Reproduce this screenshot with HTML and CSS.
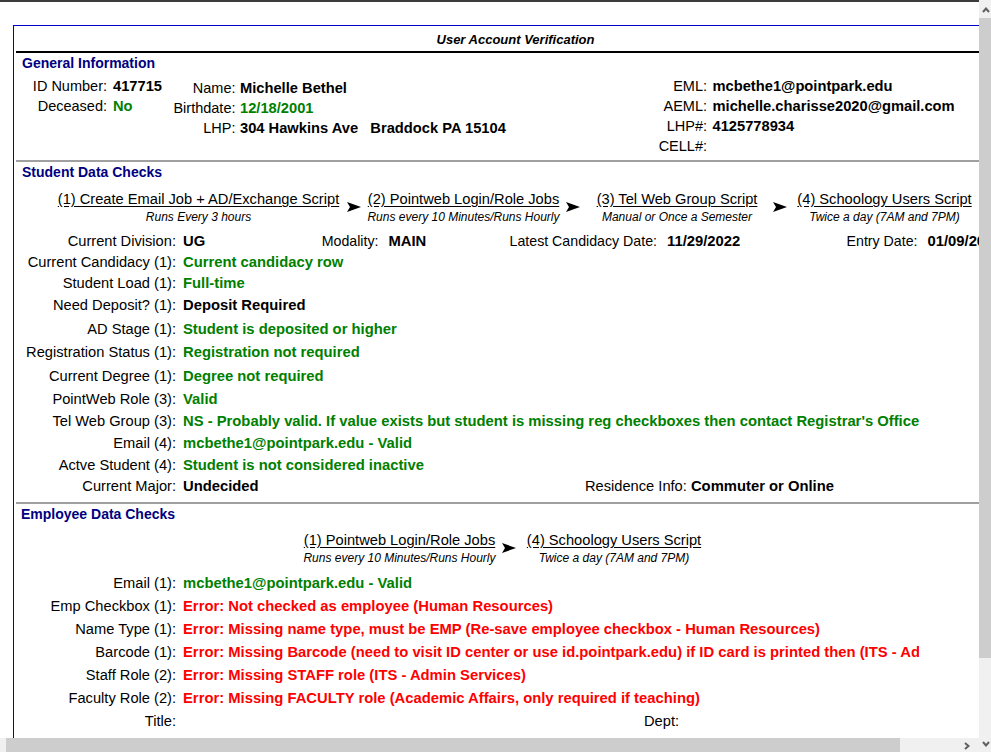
FILE: index.html
```html
<!DOCTYPE html>
<html>
<head>
<meta charset="utf-8">
<title>User Account Verification</title>
<link rel="stylesheet" href="styles.css">
</head>
<body>
<div class="frame">
  <div class="pane">
    <div class="viewport">
      <div class="box">
        <div class="title">User Account Verification</div>
        <div class="rule-black"></div>

        <div class="sec-head">General Information</div>
        <div class="gen">
          <div class="gcol g1">
            <span class="glbl">ID Number:</span><span class="gval">417715</span>
            <span class="glbl">Deceased:</span><span class="gval ok">No</span>
          </div>
          <div class="gcol g2">
            <span class="glbl">Name:</span><span class="gval">Michelle Bethel</span>
            <span class="glbl">Birthdate:</span><span class="gval ok">12/18/2001</span>
            <span class="glbl">LHP:</span><span class="gval">304 Hawkins Ave&nbsp;&nbsp;&nbsp;Braddock PA 15104</span>
          </div>
          <div class="gcol g3">
            <span class="glbl">EML:</span><span class="gval">mcbethe1@pointpark.edu</span>
            <span class="glbl">AEML:</span><span class="gval">michelle.charisse2020@gmail.com</span>
            <span class="glbl">LHP#:</span><span class="gval">4125778934</span>
            <span class="glbl">CELL#:</span><span class="gval"></span>
          </div>
        </div>
        <div class="rule-gray"></div>

        <div class="sec-head">Student Data Checks</div>
        <div class="flow flow-student">
          <div class="step st-1">
            <div class="step-name">(1) Create Email Job + AD/Exchange Script</div>
            <div class="step-note">Runs Every 3 hours</div>
          </div>
          <div class="arrow"><svg width="14" height="10" viewBox="0 0 14 10"><path d="M0 0 L14 5 L0 10 L3 5 Z" fill="#000"/></svg></div>
          <div class="step st-2">
            <div class="step-name">(2) Pointweb Login/Role Jobs</div>
            <div class="step-note">Runs every 10 Minutes/Runs Hourly</div>
          </div>
          <div class="arrow"><svg width="14" height="10" viewBox="0 0 14 10"><path d="M0 0 L14 5 L0 10 L3 5 Z" fill="#000"/></svg></div>
          <div class="step st-3">
            <div class="step-name">(3) Tel Web Group Script</div>
            <div class="step-note">Manual or Once a Semester</div>
          </div>
          <div class="arrow arrow-narrow"><svg width="14" height="10" viewBox="0 0 14 10"><path d="M0 0 L14 5 L0 10 L3 5 Z" fill="#000"/></svg></div>
          <div class="step st-4">
            <div class="step-name">(4) Schoology Users Script</div>
            <div class="step-note">Twice a day (7AM and 7PM)</div>
          </div>
        </div>

        <div class="rows student">
          <div class="row first">
            <span class="lbl">Current Division:</span>
            <span class="val c-ug">UG</span>
            <span class="lbl lbl-sm l-mod">Modality:</span>
            <span class="val wide-gap c-main">MAIN</span>
            <span class="lbl lbl-sm l-cand">Latest Candidacy Date:</span>
            <span class="val wide-gap c-date">11/29/2022</span>
            <span class="lbl lbl-sm l-entry">Entry Date:</span>
            <span class="val wide-gap">01/09/2023</span>
          </div>
          <div class="row up1"><span class="lbl">Current Candidacy (1):</span><span class="val ok">Current candidacy row</span></div>
          <div class="row up1"><span class="lbl">Student Load (1):</span><span class="val ok">Full-time</span></div>
          <div class="row"><span class="lbl">Need Deposit? (1):</span><span class="val">Deposit Required</span></div>
          <div class="row dn2"><span class="lbl">AD Stage (1):</span><span class="val ok">Student is deposited or higher</span></div>
          <div class="row dn1"><span class="lbl">Registration Status (1):</span><span class="val ok">Registration not required</span></div>
          <div class="row dn2"><span class="lbl">Current Degree (1):</span><span class="val ok">Degree not required</span></div>
          <div class="row dn1"><span class="lbl">PointWeb Role (3):</span><span class="val ok">Valid</span></div>
          <div class="row"><span class="lbl">Tel Web Group (3):</span><span class="val ok">NS - Probably valid. If value exists but student is missing reg checkboxes then contact Registrar's Office</span></div>
          <div class="row"><span class="lbl">Email (4):</span><span class="val ok">mcbethe1@pointpark.edu - Valid</span></div>
          <div class="row"><span class="lbl">Actve Student (4):</span><span class="val ok">Student is not considered inactive</span></div>
          <div class="row up1">
            <span class="lbl">Current Major:</span>
            <span class="val c-major">Undecided</span>
            <span class="plain">Residence Info: <b class="val-inline">Commuter or Online</b></span>
          </div>
        </div>
        <div class="rule-gray rule-emp"></div>

        <div class="sec-head emp-head">Employee Data Checks</div>
        <div class="flow flow-emp">
          <div class="step se-1">
            <div class="step-name">(1) Pointweb Login/Role Jobs</div>
            <div class="step-note">Runs every 10 Minutes/Runs Hourly</div>
          </div>
          <div class="arrow"><svg width="14" height="10" viewBox="0 0 14 10"><path d="M0 0 L14 5 L0 10 L3 5 Z" fill="#000"/></svg></div>
          <div class="step se-2">
            <div class="step-name">(4) Schoology Users Script</div>
            <div class="step-note">Twice a day (7AM and 7PM)</div>
          </div>
        </div>

        <div class="rows emp">
          <div class="row"><span class="lbl">Email (1):</span><span class="val ok">mcbethe1@pointpark.edu - Valid</span></div>
          <div class="row"><span class="lbl">Emp Checkbox (1):</span><span class="val err">Error: Not checked as employee (Human Resources)</span></div>
          <div class="row"><span class="lbl">Name Type (1):</span><span class="val err">Error: Missing name type, must be EMP (Re-save employee checkbox - Human Resources)</span></div>
          <div class="row"><span class="lbl">Barcode (1):</span><span class="val err">Error: Missing Barcode (need to visit ID center or use id.pointpark.edu) if ID card is printed then (ITS - Admin Services)</span></div>
          <div class="row"><span class="lbl">Staff Role (2):</span><span class="val err">Error: Missing STAFF role (ITS - Admin Services)</span></div>
          <div class="row"><span class="lbl">Faculty Role (2):</span><span class="val err">Error: Missing FACULTY role (Academic Affairs, only required if teaching)</span></div>
          <div class="row"><span class="lbl">Title:</span><span class="val c-title"></span><span class="plain">Dept:</span></div>
          <div class="row"><span class="lbl">Role:</span><span class="val"></span></div>
        </div>
      </div>
    </div>
    <div class="hscroll">
      <div class="hthumb"></div>
      <div class="hbtn">
        <svg width="6" height="8" viewBox="0 0 6 8"><polyline points="1,1 4.5,4 1,7" fill="none" stroke="#606060" stroke-width="2"/></svg>
      </div>
    </div>
  </div>
  <div class="vscroll">
    <div class="vbtn-up">
      <svg width="8" height="6" viewBox="0 0 8 6"><polyline points="1,5 4,1.5 7,5" fill="none" stroke="#606060" stroke-width="2"/></svg>
    </div>
    <div class="vthumb"></div>
    <div class="vbtn-down">
      <svg width="8" height="6" viewBox="0 0 8 6"><polyline points="1,1 4,4.5 7,1" fill="none" stroke="#606060" stroke-width="2"/></svg>
    </div>
  </div>
</div>
</body>
</html>
```

FILE: styles.css
```css
* { box-sizing: border-box; }

html, body {
  margin: 0;
  padding: 0;
  background: #fff;
}

body {
  font-family: "Liberation Sans", Arial, sans-serif;
  color: #000;
  font-size: 14px;
}

.frame {
  display: flex;
  width: 991px;
  height: 752px;
  overflow: hidden;
}

.pane {
  width: 979px;
  flex: none;
  display: flex;
  flex-direction: column;
  border-top: 2px solid #3c3c3c;
}

.viewport {
  flex: 1;
  overflow: hidden;
  padding: 23px 0 0 13px;
}

.box {
  width: 1005px;
  border: 1px solid #0000cd;
  padding-bottom: 40px;
}

.title {
  height: 25px;
  padding-top: 3px;
  line-height: 22px;
  text-align: center;
  font-size: 13px;
  font-weight: bold;
  font-style: italic;
}

.rule-black {
  height: 2px;
  margin: 0 2px;
  background: #000;
}

.rule-gray {
  height: 2px;
  margin: 4px 2px 0;
  background: #a0a0a0;
}

.rule-emp { margin-top: 5px; }

.sec-head {
  padding-left: 8px;
  line-height: 20px;
  font-size: 14px;
  font-weight: bold;
  color: #000080;
}

.emp-head { padding-left: 7px; }

/* General information */
.gen {
  display: flex;
  margin-top: 3px;
}

.gcol {
  display: grid;
  grid-auto-rows: 20px;
  align-items: center;
  flex: none;
  white-space: nowrap;
}

.g1 {
  width: 136px;
  grid-template-columns: 93px auto;
  column-gap: 6px;
}

.g2 {
  width: 450px;
  grid-template-columns: 85.5px auto;
  column-gap: 4.5px;
  padding-top: 2px;
}

.g3 {
  grid-template-columns: 107px auto;
  column-gap: 5.5px;
}

.glbl {
  text-align: right;
  font-size: 14.5px;
}

.gval {
  font-size: 14.7px;
  font-weight: bold;
}

.ok { color: #008000; }
.err { color: #ff0000; }

/* Job flow */
.flow {
  display: flex;
  white-space: nowrap;
}

.flow-student {
  margin-top: 8px;
  margin-left: 38px;
}

.flow-emp {
  margin-top: 7px;
  margin-left: 285px;
}

.step {
  flex: none;
  text-align: center;
}

.st-1 { width: 293px; }
.st-2 { width: 201px; }
.st-3 { width: 190px; }
.st-4 { width: 193px; }
.se-1 { width: 201px; }
.se-2 { width: 192px; }

.step-name {
  font-size: 14.67px;
  line-height: 18px;
  text-decoration: underline;
  text-underline-offset: 2px;
}

.step-note {
  margin-top: 1px;
  font-size: 12px;
  line-height: 16px;
  font-style: italic;
}

.arrow {
  flex: none;
  width: 18px;
  display: flex;
  justify-content: center;
  align-items: flex-start;
  padding-top: 12px;
}

.arrow-narrow { width: 16px; }

/* Data rows */
.rows.student { margin-top: 5px; }
.rows.emp { margin-top: 5px; }

.row {
  display: flex;
  align-items: center;
  height: 22px;
  white-space: nowrap;
}

.emp .row { height: 23px; }

.row.up1 { margin-top: -1px; }
.row.dn1 { margin-top: 1px; }
.row.dn2 { margin-top: 2px; }

.lbl {
  flex: none;
  width: 162px;
  text-align: right;
  font-size: 14.67px;
}

.lbl-sm { font-size: 14.2px; }

.val {
  flex: none;
  margin-left: 7px;
  font-size: 14.8px;
  font-weight: bold;
}

.val.wide-gap { margin-left: 10px; }

.c-ug { width: 115px; }
.l-mod { width: 80.5px; }
.c-main { width: 109.5px; }
.l-cand { width: 159px; }
.c-date { width: 100px; }
.l-entry { width: 150.5px; }
.c-major { width: 402px; }
.c-title { width: 461px; }

.emp .val {
  max-width: 736px;
  overflow: hidden;
}

.plain {
  font-size: 14.67px;
}

.val-inline {
  font-size: 14.8px;
}

/* Scrollbars */
.hscroll {
  flex: none;
  height: 14px;
  display: flex;
  align-items: stretch;
  background: #f0f0f0;
}

.hthumb {
  width: 894px;
  margin-left: 6px;
  background: #cdcdcd;
}

.hbtn {
  margin-left: auto;
  width: 17px;
  display: flex;
  align-items: center;
  justify-content: flex-start;
  padding-left: 2px;
  padding-top: 2px;
}

.vscroll {
  flex: none;
  width: 12px;
  display: flex;
  flex-direction: column;
  background: #f0f0f0;
}

.vbtn-up {
  height: 18px;
  display: flex;
  justify-content: center;
  padding-top: 7px;
  padding-left: 2px;
}

.vthumb {
  height: 640px;
  background: #cdcdcd;
}

.vbtn-down {
  margin-top: auto;
  height: 11px;
  display: flex;
  justify-content: center;
  padding-left: 2px;
}
```
